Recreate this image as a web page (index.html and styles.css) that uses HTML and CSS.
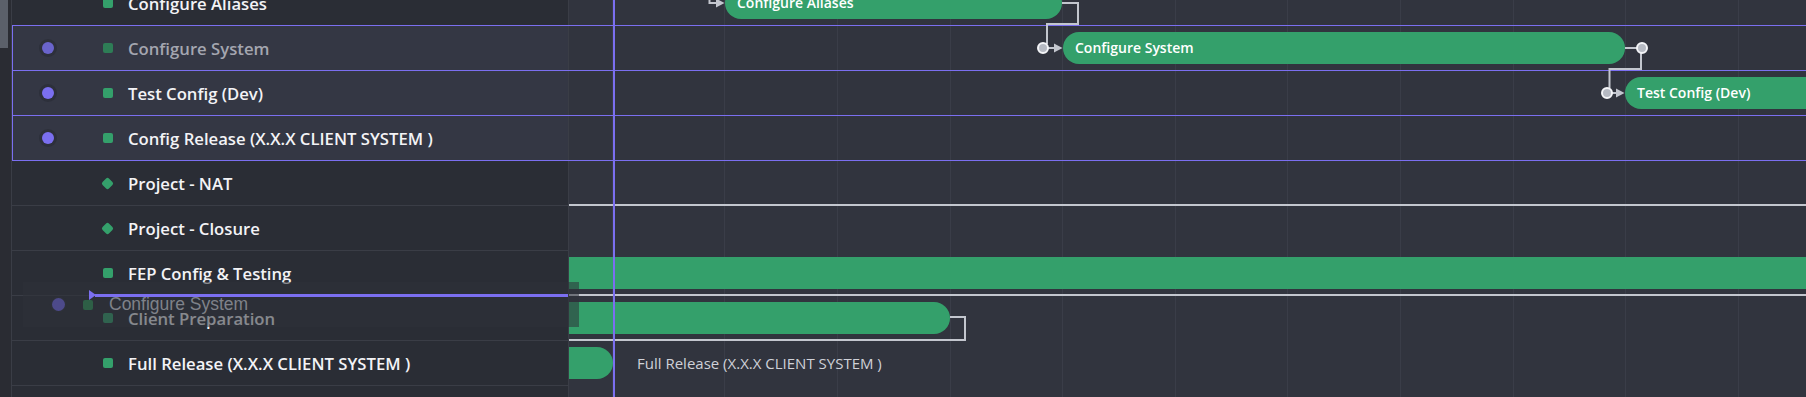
FILE: index.html
```html
<!DOCTYPE html>
<html lang="en">
<head>
    <meta charset="UTF-8">
    <meta name="viewport" content="width=device-width, initial-scale=1.0">
    <title>Gantt - Tasks</title>
    <link rel="stylesheet" href="styles.css">
</head>
<body>
    <div class="board">
        <div class="strip"><div class="thumb"></div></div>

        <div class="rows">
            <div class="row">
                <div class="cell"><span class="dot off"></span><span class="icon task"></span><span class="name">Configure Aliases</span></div>
                <div class="track"><div class="bar" style="left: 156px; width: 337px;">Configure Aliases</div></div>
            </div>

            <div class="row sel dragging">
                <div class="cell"><span class="dot"></span><span class="icon task"></span><span class="name">Configure System</span></div>
                <div class="track"><div class="bar" style="left: 494px; width: 562px;">Configure System</div></div>
            </div>

            <div class="row sel">
                <div class="cell"><span class="dot"></span><span class="icon task"></span><span class="name">Test Config (Dev)</span></div>
                <div class="track"><div class="bar" style="left: 1056px; width: 400px;">Test Config (Dev)</div></div>
            </div>

            <div class="row sel">
                <div class="cell"><span class="dot"></span><span class="icon task"></span><span class="name">Config Release (X.X.X CLIENT SYSTEM )</span></div>
                <div class="track"></div>
            </div>

            <div class="row">
                <div class="cell"><span class="dot off"></span><span class="icon milestone"></span><span class="name">Project - NAT</span></div>
                <div class="track"></div>
            </div>

            <div class="row">
                <div class="cell"><span class="dot off"></span><span class="icon milestone"></span><span class="name">Project - Closure</span></div>
                <div class="track"></div>
            </div>

            <div class="row">
                <div class="cell"><span class="dot off"></span><span class="icon task"></span><span class="name">FEP Config &amp; Testing</span></div>
                <div class="track"><div class="bar flat" style="left: -40px; width: 1400px;"></div></div>
            </div>

            <div class="row">
                <div class="cell"><span class="dot off"></span><span class="icon task"></span><span class="name">Client Preparation</span></div>
                <div class="track"><div class="bar" style="left: -200px; width: 581px;"></div></div>
            </div>

            <div class="row">
                <div class="cell"><span class="dot off"></span><span class="icon task"></span><span class="name">Full Release (X.X.X CLIENT SYSTEM )</span></div>
                <div class="track">
                    <div class="bar" style="left: -200px; width: 244px;"></div>
                    <span class="bar-label" style="left: 68px;">Full Release (X.X.X CLIENT SYSTEM )</span>
                </div>
            </div>

            <div class="row">
                <div class="cell"></div>
                <div class="track"></div>
            </div>
        </div>

        <!-- dependency links -->
        <svg class="links" width="1806" height="397" viewBox="0 0 1806 397">
            <g fill="none" stroke="#c3c6ce" stroke-width="2">
                <path d="M709.5 -6 V3 H717"/>
                <path d="M1062 3 H1078 V24 H1047 V44"/>
                <path d="M1048 48 H1055"/>
                <path d="M1625 48 H1637"/>
                <path d="M1641 53 V69 H1609.5 V88"/>
                <path d="M1612 93 H1617"/>
                <path d="M569 205 H1806"/>
                <path d="M569 295 H1806"/>
                <path d="M950 317 H965 V340 H569"/>
            </g>
            <g fill="#c3c6ce">
                <polygon points="716,-1.5 724.5,3 716,7.5"/>
                <polygon points="1054,43.5 1062.5,48 1054,52.5"/>
                <polygon points="1616,88.5 1624.5,93 1616,97.5"/>
            </g>
            <g fill="#b6bac3" stroke="#f4f5f8" stroke-width="2">
                <circle cx="1043" cy="48" r="5"/>
                <circle cx="1642" cy="48" r="5"/>
                <circle cx="1607" cy="93" r="5"/>
            </g>
        </svg>

        <div class="today"></div>

        <div class="ghost">
            <span class="dot"></span><span class="icon task"></span><span class="name">Configure System</span>
        </div>
        <div class="drop-line"></div>
    </div>
</body>
</html>
```

FILE: styles.css
```css
body {
    margin: 0;
    background: #2a2d34;
    font-family: "Open Sans", "Noto Sans", sans-serif;
    overflow: hidden;
}
.board {
    position: relative;
    display: flex;
    width: 1806px;
    height: 397px;
    overflow: hidden;
}
.strip {
    flex: none;
    width: 11px;
    background: #2a2c33;
    border-right: 1px solid #3a3d46;
}
.thumb {
    width: 8px;
    height: 48px;
    background: #5b606a;
}
.rows {
    flex: 1;
    margin-top: -19px;
    background-color: #31343e;
    background-image: repeating-linear-gradient(90deg, transparent 0 36.8px, #3a3d48 36.8px 37.8px, transparent 37.8px 112.6px);
}
.row {
    position: relative;
    display: flex;
    height: 45px;
}
.row.sel::after {
    content: "";
    position: absolute;
    left: 0;
    right: -1px;
    top: -1px;
    bottom: 0;
    border: 1px solid #7b6ff0;
    border-right: none;
    pointer-events: none;
    z-index: 2;
}
.cell {
    flex: none;
    box-sizing: border-box;
    width: 557px;
    display: flex;
    align-items: center;
    background: #2a2d35;
    border-bottom: 1px solid #3a3d46;
    border-right: 1px solid #3a3d46;
    color: #f3f3f6;
    font-size: 16.7px;
    font-weight: 600;
    white-space: nowrap;
}
.row.sel .cell {
    background: #343744;
}
.dot {
    flex: none;
    width: 12px;
    height: 12px;
    margin-left: 30px;
    border-radius: 50%;
    background: #7b6ff0;
    box-shadow: 0 0 0 3px #2d303b;
}
.dot.off {
    visibility: hidden;
}
.icon {
    flex: none;
    width: 10px;
    height: 10px;
    margin-left: 49px;
    border-radius: 2px;
    background: #34a06b;
}
.icon.milestone {
    width: 9px;
    height: 9px;
    transform: rotate(45deg);
    margin-right: 1px;
}
.name {
    margin-left: 15px;
}
.dragging .dot {
    background: #6a64cc;
}
.dragging .icon {
    background: #2e7d56;
}
.dragging .name {
    color: #a4a6b0;
}
.track {
    flex: 1;
    position: relative;
    overflow: hidden;
}
.bar {
    position: absolute;
    top: 6px;
    height: 32px;
    box-sizing: border-box;
    padding-left: 12px;
    border-radius: 16px;
    background: #34a06b;
    color: #ffffff;
    font-size: 14px;
    font-weight: 600;
    line-height: 32px;
    white-space: nowrap;
}
.bar.flat {
    border-radius: 0;
}
.bar-label {
    position: absolute;
    top: 0;
    line-height: 44px;
    font-size: 15px;
    font-weight: 500;
    color: #cfd1d8;
    white-space: nowrap;
}
.links {
    position: absolute;
    left: 0;
    top: 0;
    z-index: 3;
    overflow: visible;
}
.today {
    position: absolute;
    left: 613px;
    top: 0;
    width: 2px;
    height: 397px;
    background: #7b6ff0;
    z-index: 4;
}
.ghost {
    position: absolute;
    left: 23px;
    top: 282px;
    width: 556px;
    height: 45px;
    display: flex;
    align-items: center;
    background: rgba(46, 50, 56, 0.55);
    z-index: 5;
}
.ghost .dot {
    width: 13px;
    height: 13px;
    margin-left: 29px;
    background: #4d4a8a;
    box-shadow: 0 0 0 2px #2d3038;
}
.ghost .icon {
    margin-left: 18px;
    background: #2e5f46;
}
.ghost .name {
    margin-left: 16px;
    font-family: "Liberation Sans", Arial, sans-serif;
    font-size: 17.5px;
    font-weight: 400;
    color: #7f828a;
}
.drop-line {
    position: absolute;
    left: 95px;
    top: 294px;
    width: 473px;
    height: 3px;
    background: #7b6ff0;
    z-index: 6;
}
.drop-line::before {
    content: "";
    position: absolute;
    left: -6px;
    top: -4px;
    border-left: 7px solid #7b6ff0;
    border-top: 5.5px solid transparent;
    border-bottom: 5.5px solid transparent;
}
```
